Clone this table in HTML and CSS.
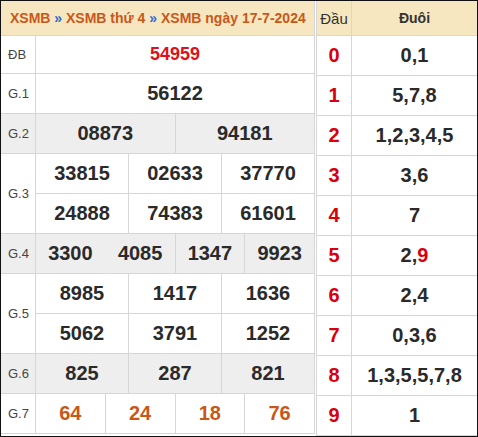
FILE: index.html
```html
<!DOCTYPE html>
<html lang="vi">
<head>
<meta charset="utf-8">
<title>XSMB ngày 17-7-2024</title>
<link rel="stylesheet" href="styles.css">
</head>
<body>
<div class="board">
  <div class="prizes">
    <div class="head"><span class="crumbs">XSMB <span class="sep">»</span> XSMB thứ 4 <span class="sep">»</span> XSMB ngày 17-7-2024</span></div>

    <div class="lbl">ĐB</div>
    <div class="num special s12">54959</div>

    <div class="lbl">G.1</div>
    <div class="num s12">56122</div>

    <div class="lbl alt">G.2</div>
    <div class="num alt s6">08873</div>
    <div class="num alt s6">94181</div>

    <div class="lbl tall">G.3</div>
    <div class="num s4">33815</div>
    <div class="num s4">02633</div>
    <div class="num s4">37770</div>
    <div class="num s4">24888</div>
    <div class="num s4">74383</div>
    <div class="num s4">61601</div>

    <div class="lbl alt">G.4</div>
    <div class="num alt s3 joined">3300</div>
    <div class="num alt s3">4085</div>
    <div class="num alt s3">1347</div>
    <div class="num alt s3">9923</div>

    <div class="lbl tall">G.5</div>
    <div class="num s4">8985</div>
    <div class="num s4">1417</div>
    <div class="num s4">1636</div>
    <div class="num s4">5062</div>
    <div class="num s4">3791</div>
    <div class="num s4">1252</div>

    <div class="lbl alt">G.6</div>
    <div class="num alt s4">825</div>
    <div class="num alt s4">287</div>
    <div class="num alt s4">821</div>

    <div class="lbl">G.7</div>
    <div class="num seven s3">64</div>
    <div class="num seven s3">24</div>
    <div class="num seven s3">18</div>
    <div class="num seven s3">76</div>
  </div>

  <div class="loto">
    <div class="lhead dau">Đầu</div>
    <div class="lhead duoi">Đuôi</div>

    <div class="d">0</div><div class="t">0,1</div>
    <div class="d">1</div><div class="t">5,7,8</div>
    <div class="d">2</div><div class="t">1,2,3,4,5</div>
    <div class="d">3</div><div class="t">3,6</div>
    <div class="d">4</div><div class="t">7</div>
    <div class="d">5</div><div class="t">2,<span class="hit">9</span></div>
    <div class="d">6</div><div class="t">2,4</div>
    <div class="d">7</div><div class="t">0,3,6</div>
    <div class="d">8</div><div class="t">1,3,5,5,7,8</div>
    <div class="d">9</div><div class="t">1</div>
  </div>
</div>
</body>
</html>
```

FILE: styles.css
```css
* { box-sizing: border-box; }

html, body {
  margin: 0;
  padding: 0;
  background: #ffffff;
}

body {
  font-family: "Liberation Sans", Arial, sans-serif;
  color: #333333;
}

.board {
  width: 478px;
  height: 437px;
  border: 1px solid #111111;
  display: flex;
  gap: 1px;
  background: #ffffff;
}

/* ---------- left: prizes ---------- */
.prizes {
  width: 314px;
  display: grid;
  grid-template-columns: 35px repeat(12, 1fr);
  grid-template-rows: 35px 38px repeat(9, 40px);
  align-content: start;
}

.prizes > div {
  border-right: 1px solid #d6d6d6;
  border-bottom: 1px solid #d6d6d6;
  display: flex;
  align-items: center;
}

.head {
  grid-column: 1 / -1;
  background: #f6e7c0;
  padding-left: 9px;
  font-size: 14px;
  font-weight: bold;
  color: #c8581a;
  white-space: nowrap;
}

.head .sep {
  color: #2f6bd3;
}

.lbl {
  grid-column: 1;
  padding-left: 7px;
  font-size: 13px;
  color: #444444;
}

.lbl.tall {
  grid-row: span 2;
}

.num {
  justify-content: center;
  font-size: 20px;
  font-weight: bold;
  color: #2a2a2a;
}

.num.special {
  font-size: 18px;
  color: #e0101b;
}

.num.seven {
  color: #c8581a;
}

.alt {
  background: #eeeeee;
}

.prizes > .joined {
  border-right-color: #eeeeee;
}

.s12 { grid-column: span 12; }
.s6  { grid-column: span 6; }
.s4  { grid-column: span 4; }
.s3  { grid-column: span 3; }

/* ---------- right: loto ---------- */
.loto {
  flex: 1;
  display: grid;
  grid-template-columns: 36px 1fr;
  grid-template-rows: 35px repeat(10, 40px);
  align-content: start;
}

.loto > div {
  border-bottom: 1px solid #d6d6d6;
  display: flex;
  align-items: center;
  justify-content: center;
}

.loto > div:nth-child(odd) {
  border-left: 1px solid #d6d6d6;
  border-right: 1px solid #d6d6d6;
}

.lhead {
  background: #f6e7c0;
  color: #333333;
  font-size: 14px;
}

.lhead.dau {
  font-weight: normal;
  font-size: 15px;
}

.lhead.duoi {
  font-weight: bold;
}

.d {
  font-size: 20px;
  font-weight: bold;
  color: #d8000c;
}

.t {
  font-size: 20px;
  font-weight: bold;
  color: #2a2a2a;
}

.t .hit {
  color: #d8000c;
}
```
